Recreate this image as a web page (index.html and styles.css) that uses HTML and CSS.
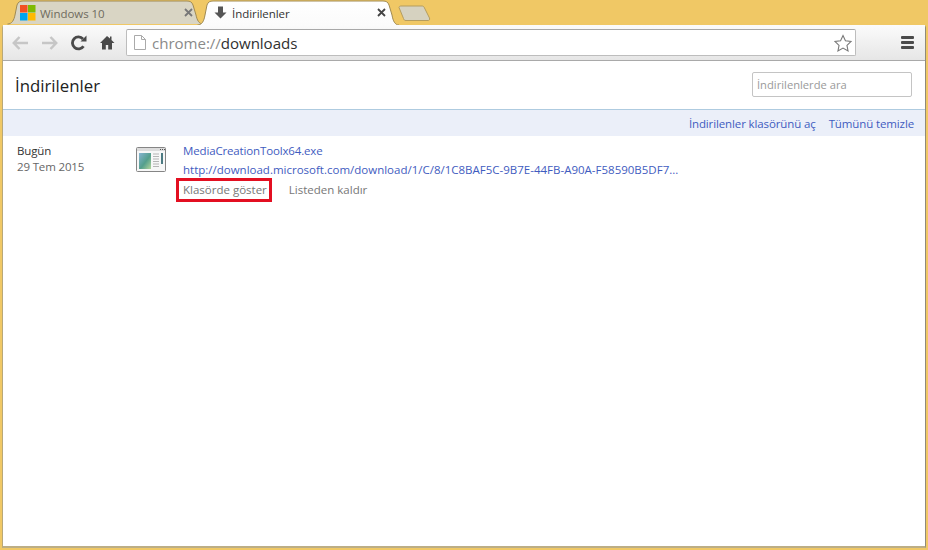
FILE: index.html
```html
<!DOCTYPE html>
<html lang="tr">
<head>
<meta charset="utf-8">
<title>İndirilenler</title>
<link rel="stylesheet" href="styles.css">
</head>
<body>
<div class="frame">
  <div class="tabstrip">
    <div class="tab tab-inactive">
      <svg class="tab-shape" width="196" height="25" viewBox="0 0 196 25"><path d="M0.5 24 C5 24 7 20 8 15 L10 5 C11 2 13 1 16 1 H180 C183 1 185 2 186 5 L189 15 C190 20 192 24 196 24" fill="#d9d5c4" stroke="#a08a52"/></svg>
      <svg class="tab-icon" width="16" height="16" viewBox="0 0 16 16"><rect width="7.5" height="7.5" fill="#f25022"/><rect x="8" width="7.5" height="7.5" fill="#7fba00"/><rect y="8" width="7.5" height="7.5" fill="#00a4ef"/><rect x="8" y="8" width="7.5" height="7.5" fill="#ffb900"/></svg>
      <span class="tab-title muted">Windows 10</span>
      <svg class="tab-close" width="9" height="9" viewBox="0 0 9 9"><path d="M1 1l7 7M8 1L1 8" stroke="#777" stroke-width="1.8"/></svg>
    </div>
    <div class="tab tab-active">
      <svg class="tab-shape" width="202" height="25" viewBox="0 0 202 25"><defs><linearGradient id="tabfill" x1="0" y1="0" x2="0" y2="1"><stop offset="0" stop-color="#fff"/><stop offset="1" stop-color="#fbfbfb"/></linearGradient></defs><path d="M0.5 25 C5 25 7 21 8 15 L10 5 C11 2 13 1 16 1 H186 C189 1 191 2 192 5 L195 15 C196 21 198 25 202 25" fill="url(#tabfill)" stroke="#a08a52"/></svg>
      <svg class="tab-icon arrow" width="13" height="13" viewBox="0 0 13 13"><path d="M4 0.5h5v6h3.5l-6 6-6-6H4z" fill="#555"/></svg>
      <span class="tab-title">İndirilenler</span>
      <svg class="tab-close" width="9" height="9" viewBox="0 0 9 9"><path d="M1 1l7 7M8 1L1 8" stroke="#444" stroke-width="1.8"/></svg>
    </div>
    <svg class="new-tab" width="33" height="17" viewBox="0 0 33 17"><path d="M1 2.500C1 1.500 2 1 3 1H24C25 1 26 1.500 26.500 3L31.500 13C32 15 31 15.500 30 15.500H8C6.500 15.500 6 15 5.500 13.500Z" fill="#d6d2c0" stroke="#b59d5e"/></svg>
  </div>

  <div class="window">
    <div class="toolbar">
      <svg class="tool back" width="16" height="14" viewBox="0 0 16 14"><path d="M7.500 1L1.800 7l5.700 6M2.500 7H16" fill="none" stroke="#c6c6c6" stroke-width="2.500"/></svg>
      <svg class="tool forward" width="16" height="14" viewBox="0 0 16 14"><path d="M8.500 1L14.200 7l-5.700 6M13.500 7H0" fill="none" stroke="#c6c6c6" stroke-width="2.500"/></svg>
      <svg class="tool reload" width="16" height="16" viewBox="0 0 16 16"><path d="M12.500 11.200A6 6 0 1 1 12 4" fill="none" stroke="#4a4a4a" stroke-width="2.800"/><path d="M9.500 6.500H15.500V0.500Z" fill="#4a4a4a"/></svg>
      <svg class="tool home" width="15" height="15" viewBox="0 0 15 15"><path d="M7 1L0 8h2v6.500h3.800V10h2.400v4.500H12V8h2.500L11.500 5V1.500H10v2Z" fill="#4a4a4a"/></svg>
      <div class="omnibox">
        <svg class="page-icon" width="12" height="15" viewBox="0 0 12 15"><path d="M0.500 0.500H7.500L11.500 4.500V14.500H0.500Z M7.500 0.500V4.500H11.500" fill="#fff" stroke="#aaa"/></svg>
        <span class="url"><span class="scheme">chrome://</span>downloads</span>
        <svg class="star" width="18" height="18" viewBox="0 0 20 19"><path d="M10 1.200l2.700 5.800 6.300.8-4.600 4.300 1.200 6.200L10 15.200l-5.600 3.100 1.200-6.200L1 7.800l6.300-.8z" fill="#fff" stroke="#777" stroke-width="1.200"/></svg>
      </div>
      <div class="menu"><i></i><i></i><i></i></div>
    </div>

    <main class="page">
      <header class="page-head">
        <h1>İndirilenler</h1>
        <input class="search" type="text" placeholder="İndirilenlerde ara">
      </header>
      <nav class="actions-bar">
        <a>İndirilenler klasörünü aç</a>
        <a>Tümünü temizle</a>
      </nav>
      <section class="entry">
        <div class="date">
          <div class="day">Bugün</div>
          <div class="full">29 Tem 2015</div>
        </div>
        <svg class="file-icon" width="32" height="28" viewBox="0 0 32 28">
          <defs><linearGradient id="pic" x1="0" y1="0" x2="1" y2="1"><stop offset="0" stop-color="#86b4d2"/><stop offset="0.55" stop-color="#549f8c"/><stop offset="1" stop-color="#b4d69c"/></linearGradient></defs>
          <rect x="1.500" y="1.500" width="29" height="24" rx="1" fill="#f7f7f7" stroke="#858585"/>
          <rect x="2" y="2" width="28" height="3" fill="#dcdcdc"/>
          <rect x="25" y="3" width="1" height="1" fill="#555"/><rect x="27" y="3" width="1" height="1" fill="#555"/><rect x="29" y="3" width="1" height="1" fill="#555"/>
          <rect x="4" y="7" width="12" height="16" fill="url(#pic)"/>
          <path d="M18 8h6M18 10.500h6M18 13h6M18 15.500h6M18 18h6M18 20.500h6" stroke="#b5b5b5"/>
          <rect x="26" y="7" width="2" height="11" fill="#4c7a82"/>
        </svg>
        <div class="details">
          <a class="name">MediaCreationToolx64.exe</a>
          <a class="source">http://download.microsoft.com/download/1/C/8/1C8BAF5C-9B7E-44FB-A90A-F58590B5DF7...</a>
          <div class="links">
            <a class="highlighted">Klasörde göster</a>
            <a>Listeden kaldır</a>
          </div>
        </div>
      </section>
    </main>
  </div>
</div>
</body>
</html>
```
FILE: styles.css
```css
* { box-sizing: border-box; }
html, body { margin: 0; height: 100%; overflow: hidden; }
body { background: #f0c865; font-family: "Open Sans", "Liberation Sans", sans-serif; }

.frame { height: 550px; display: flex; flex-direction: column; padding: 0 2px 2px 2px; }

.tabstrip { display: flex; align-items: flex-start; height: 25px; padding-left: 5px; flex: none; position: relative; z-index: 1; }
.tab { position: relative; height: 25px; display: flex; align-items: center; font-size: 11.5px; }
.tab-shape { position: absolute; left: 0; top: 0; }
.tab-inactive { width: 196px; padding-left: 13px; }
.tab-active { width: 202px; margin-left: -6px; padding-left: 17px; }
.tab-icon, .tab-title, .tab-close { position: relative; }
.tab-icon { flex: none; margin-right: 4px; }
.tab-icon.arrow { margin-right: 5px; }
.tab-title { flex: 1; letter-spacing: -0.05px; color: #333; margin-top: 1px; }
.tab-title.muted { color: #6f6b5e; }
.tab-close { flex: none; }
.tab-inactive .tab-close { margin-right: 10px; }
.tab-active .tab-close { margin-right: 13px; }
.new-tab { margin: 5px 0 0 -1px; flex: none; }

.window { flex: 1; display: flex; flex-direction: column; min-height: 0; background: #fff; border: 1px solid #b9a878; border-top: 0; border-right: 1px solid #8f8a7a; border-bottom: 2px solid #bcae86; border-radius: 3px 3px 0 0; }

.toolbar { height: 36px; flex: none; display: flex; align-items: center; background: linear-gradient(#fbfbfb, #e6e6e6); border-bottom: 1px solid #a9a9a9; padding: 0 0 0 9px; }
.tool { flex: none; }
.back { margin-right: 14px; }
.forward { margin-right: 13px; }
.reload { margin-right: 13px; }
.home { margin-right: 11px; }

.omnibox { width: 730px; height: 27px; flex: none; display: flex; align-items: center; background: #fff; border: 1px solid #bdbdbd; border-top-color: #a8a8a8; border-radius: 2px; padding: 0 3px 0 7px; }
.page-icon { flex: none; margin-right: 6px; }
.url { flex: 1; font-size: 15.1px; letter-spacing: -0.05px; color: #303030; white-space: nowrap; }
.scheme { color: #8a8a8a; }
.star { flex: none; }

.menu { margin-left: 45px; width: 13px; flex: none; display: flex; flex-direction: column; gap: 2px; }
.menu i { display: block; height: 3px; background: #4a4a4a; border-radius: 1px; }

.page { flex: 1; min-height: 0; display: flex; flex-direction: column; background: #fff; }
.page-head { height: 49px; flex: none; display: flex; align-items: center; justify-content: space-between; padding: 0 13px 0 12px; border-bottom: 1px solid #aecbe0; }
.page-head h1 { margin: 0; font-size: 16.8px; font-weight: 400; color: #222; }
.search { width: 160px; height: 25px; border: 1px solid #c4c4c4; border-radius: 2px; padding: 0 4px; font: 11.2px "Open Sans", "Liberation Sans", sans-serif; background: #fff; margin-bottom: 1px; }
.search::placeholder { color: #9a9a9a; opacity: 1; }

.actions-bar { height: 26px; flex: none; display: flex; align-items: center; justify-content: flex-end; gap: 13px; padding-right: 11px; background: #ebeff9; font-size: 11.5px; letter-spacing: -0.12px; color: #3f5cc0; }

.entry { display: flex; align-items: flex-start; padding: 7px 0 0 14px; font-size: 11.5px; letter-spacing: -0.2px; }
.date { width: 118px; flex: none; line-height: 16px; color: #666; letter-spacing: -0.15px; }
.day { color: #333; }
.file-icon { flex: none; margin: 3px 16px 0 0; }
.details { display: flex; flex-direction: column; line-height: 16px; width: 520px; }
.name { color: #3f5cc0; height: 19px; letter-spacing: -0.15px; }
.source { color: #3f5cc0; white-space: nowrap; height: 20px; letter-spacing: 0; }
.links { display: flex; gap: 22px; color: #777; letter-spacing: 0; }
.highlighted { position: relative; }
.highlighted::after { content: ""; box-sizing: border-box; position: absolute; left: -7px; top: -4px; width: 96px; height: 24px; border: 3px solid #e30f21; }
```
